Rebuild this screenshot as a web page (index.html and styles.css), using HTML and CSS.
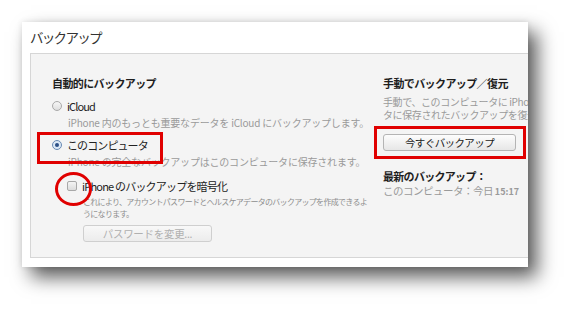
FILE: index.html
```html
<!DOCTYPE html>
<html lang="ja">
<head>
  <meta charset="UTF-8" />
  <title>バックアップ</title>
  <link rel="stylesheet" href="styles.css">
</head>
<body>

<div class="frame">
  <div class="frame-title">バックアップ</div>

  <div class="panel">
    <div class="col-left">
      <h3 class="section-title">自動的にバックアップ</h3>

      <div class="radio-row">
        <span class="radio"></span>
        <span class="radio-label">iCloud</span>
      </div>
      <div class="desc">iPhone 内のもっとも重要なデータを iCloud にバックアップします。</div>

      <div class="radio-row radio-row-pc mark-box">
        <span class="radio checked"></span>
        <span class="radio-label">このコンピュータ</span>
      </div>
      <div class="desc">iPhone の完全なバックアップはこのコンピュータに保存されます。</div>

      <div class="check-row">
        <span class="checkbox mark-circle"></span>
        <span class="check-label">iPhone のバックアップを暗号化</span>
      </div>
      <div class="small-note">
        <div>これにより、アカウントパスワードとヘルスケアデータのバックアップを作成できるよ</div>
        <div>うになります。</div>
      </div>

      <button class="btn btn-disabled">パスワードを変更...</button>
    </div>

    <div class="col-right">
      <h3 class="section-title">手動でバックアップ／復元</h3>
      <div class="desc-right">
        <div class="desc-line">手動で、このコンピュータに iPhone をバックアップするか、このコンピュー</div>
        <div class="desc-line">タに保存されたバックアップを復元します。</div>
      </div>

      <div class="red-box">
        <button class="btn btn-now">今すぐバックアップ</button>
      </div>

      <div class="latest-title">最新のバックアップ：</div>
      <div class="latest-value">このコンピュータ：今日 <b>15:17</b></div>
    </div>
  </div>
</div>

</body>
</html>
```

FILE: styles.css
```css
* {
  box-sizing: border-box;
  margin: 0;
  padding: 0;
}

html, body {
  height: 100%;
}

body {
  min-height: 309px;
  padding: 22px 0 0 22px;
  background-color: #fff;
  font-family: "Noto Sans CJK JP", "Noto Sans", sans-serif;
  color: #222;
}

.frame {
  width: 506px;
  height: 245px;
  background-color: #fff;
  overflow: hidden;
  box-shadow: 9px 10px 18px rgba(0, 0, 0, 0.65), 0 0 6px rgba(0, 0, 0, 0.1);
}

.frame-title {
  height: 31px;
  padding: 7px 0 0 8px;
  font-size: 13.5px;
  line-height: 16px;
  letter-spacing: -1.7px;
  color: #333;
}

.panel {
  display: grid;
  grid-template-columns: 331px 1fr;
  margin-left: 8px;
  width: 520px;
  height: 205px;
  padding: 22px 0 0 21px;
  background-color: #f4f4f4;
  border: 1px solid #d6d6d6;
}

.section-title {
  font-size: 11px;
  line-height: 14px;
  font-weight: bold;
  letter-spacing: -0.6px;
  color: #1e1e1e;
}

/* left column */

.radio-row {
  display: flex;
  align-items: center;
  height: 14px;
  margin-top: 9px;
}

.radio-row-pc {
  margin-top: 8px;
}

.radio {
  width: 10px;
  height: 10px;
  margin-right: 5px;
  border: 1px solid #a9a9a9;
  border-radius: 50%;
  background: linear-gradient(#f6f6f6, #dedede);
  position: relative;
}

.radio.checked {
  border-color: #6a8bb4;
  background: #dbe8f6;
}

.radio.checked::after {
  content: "";
  position: absolute;
  left: 2px;
  top: 2px;
  width: 4px;
  height: 4px;
  border-radius: 50%;
  background-color: #2b4f86;
}

.radio-label {
  font-size: 11px;
  line-height: 14px;
  letter-spacing: -0.9px;
  color: #222;
}

.desc {
  margin: 3px 0 0 16px;
  font-size: 10px;
  line-height: 14px;
  letter-spacing: -0.2px;
  color: #9a9a9a;
  white-space: nowrap;
}

.mark-box {
  position: relative;
}

.mark-box::after {
  content: "";
  position: absolute;
  left: -15px;
  top: -6px;
  width: 120px;
  height: 26px;
  border: 3px solid #e00000;
}

.check-row {
  display: flex;
  align-items: center;
  height: 14px;
  margin: 10px 0 0 15px;
}

.checkbox {
  width: 10px;
  height: 10px;
  margin-right: 5px;
  border: 1px solid #a8a8a8;
  border-radius: 2px;
  background: linear-gradient(#f4f4f4, #dcdcdc);
  position: relative;
}

.mark-circle::before {
  content: "";
  position: absolute;
  left: -13px;
  top: -10px;
  width: 31px;
  height: 28px;
  border: 3px solid #e00000;
  border-radius: 50%;
}

.check-label {
  font-size: 11px;
  line-height: 14px;
  letter-spacing: -0.8px;
  color: #222;
}

.small-note {
  margin: 3px 0 0 31px;
  font-size: 8px;
  line-height: 11.5px;
  letter-spacing: -0.7px;
  color: #8e8e8e;
  white-space: nowrap;
}

.btn {
  display: block;
  height: 17px;
  font-family: inherit;
  font-size: 10.5px;
  line-height: 15px;
  border: 1px solid #b4b4b4;
  border-radius: 3px;
  background: linear-gradient(#fdfdfd, #e6e6e6);
}

.btn-disabled {
  margin: 6px 0 0 31px;
  width: 129px;
  color: #b0b0b0;
  letter-spacing: -0.3px;
  border-color: #cfcfcf;
  background: linear-gradient(#f8f8f8, #ececec);
}

/* right column */

.col-right {
  min-width: 0;
}

.desc-right {
  margin-top: 5px;
  font-size: 10px;
  letter-spacing: -0.4px;
  color: #9a9a9a;
  white-space: nowrap;
}

.desc-line {
  height: 13px;
  line-height: 13px;
  overflow: hidden;
}

.red-box {
  margin: 5px 0 0 -9px;
  width: 152px;
  padding: 5px 7px 5px 6px;
  border: 3px solid #e00000;
}

.btn-now {
  width: 133px;
  color: #222;
  letter-spacing: -0.6px;
}

.latest-title {
  margin-top: 10px;
  font-size: 11px;
  line-height: 14px;
  font-weight: bold;
  letter-spacing: -0.7px;
  color: #1e1e1e;
}

.latest-value {
  margin-top: 1px;
  font-size: 10.5px;
  line-height: 14px;
  letter-spacing: -0.5px;
  color: #9a9a9a;
}

.latest-value b {
  font-size: 9px;
  letter-spacing: 0;
}
```
